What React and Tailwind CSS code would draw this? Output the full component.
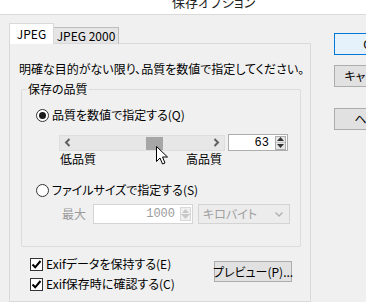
import React from 'react';

function Chevron({ dir = 'left', color = '#606060' }) {
  return (
    <svg width="7" height="9" viewBox="0 0 7 9">
      {dir === 'left' ? (
        <path d="M5.5 1 L2 4.5 L5.5 8" fill="none" stroke={color} strokeWidth="2" />
      ) : (
        <path d="M1.5 1 L5 4.5 L1.5 8" fill="none" stroke={color} strokeWidth="2" />
      )}
    </svg>
  );
}

function Spin({ disabled }) {
  const c = disabled ? '#c8c8c8' : '#333';
  return (
    <div className={`w-[11px] h-[14px] flex flex-col border ${disabled ? 'border-[#d8d8d8] bg-[#f0f0f0]' : 'border-[#adadad] bg-[#e6e6e6]'}`}>
      <div className="flex-1 flex items-center justify-center border-b border-[#c8c8c8]">
        <svg width="7" height="4" viewBox="0 0 7 4"><path d="M0 4 L3.5 0 L7 4 Z" fill={c} /></svg>
      </div>
      <div className="flex-1 flex items-center justify-center">
        <svg width="7" height="4" viewBox="0 0 7 4"><path d="M0 0 L3.5 4 L7 0 Z" fill={c} /></svg>
      </div>
    </div>
  );
}

function Radio({ checked, label }) {
  return (
    <div className="flex items-center h-[16px]">
      <div className="w-[13px] h-[13px] rounded-full border border-[#333] bg-white flex items-center justify-center">
        {checked && <div className="w-[7px] h-[7px] rounded-full bg-[#1a1a1a]" />}
      </div>
      <span className="ml-[3px]">{label}</span>
    </div>
  );
}

function Check({ label }) {
  return (
    <div className="flex items-center h-[16px]">
      <div className="w-[13px] h-[13px] border border-[#333] bg-white flex items-center justify-center">
        <svg width="11" height="11" viewBox="0 0 11 11">
          <path d="M1.5 5.5 L4.2 8.3 L9.5 2" fill="none" stroke="#000" strokeWidth="2" />
        </svg>
      </div>
      <span className="ml-[3px]">{label}</span>
    </div>
  );
}

export default function App() {
  return (
    <div className="relative w-[366px] h-[302px] overflow-hidden bg-[#f0f0f0] text-[12px] leading-[16px] text-black font-['Noto_Sans_CJK_JP',sans-serif] [font-feature-settings:'palt'] flex flex-col">
      {/* Title bar */}
      <div className="h-[15px] shrink-0 bg-white border-b border-[#dadada] overflow-hidden pl-[172px]">
        <div className="mt-[-6px] text-[13px] leading-[16px] text-[#222] whitespace-nowrap">保存オプション</div>
      </div>

      <div className="flex flex-1 min-h-0">
        {/* Left: tabs */}
        <div className="pl-[9px] pt-[8px] flex flex-col w-[311px] shrink-0">
          <div className="flex items-end h-[21px] relative z-10 -mb-px">
            <div className="w-[45px] h-[21px] bg-white border border-[#d9d9d9] border-b-0 flex items-center justify-center pb-[1px]">JPEG</div>
            <div className="w-[65px] h-[17px] bg-[#e5e5e5] border border-[#bdbdbd] border-l-0 border-b-[#d9d9d9] flex items-center justify-center">JPEG 2000</div>
          </div>
          <div className="w-[302px] flex-1 border border-[#d9d9d9] flex flex-col">
            <p className="ml-[9px] mt-[17px] whitespace-nowrap">明確な目的がない限り、品質を数値で指定してください。</p>

            {/* Group box */}
            <div className="ml-[11px] mt-[12px] w-[280px] h-[158px] shrink-0 relative border border-[#dcdcdc] rounded-[2px] flex flex-col">
              <span className="absolute left-[5px] top-[-9px] px-[1px] bg-[#f0f0f0]">保存の品質</span>

              <div className="ml-[14px] mt-[17px]">
                <Radio checked label="品質を数値で指定する(Q)" />
              </div>

              <div className="ml-[37px] mt-[11px] flex items-center">
                <div className="relative w-[166px] h-[16px] bg-[#e7e7e7] border border-[#dedede] flex items-center justify-between px-[4px]">
                  <Chevron dir="left" />
                  <div className="absolute left-[86px] top-[1px] w-[17px] h-[13px] bg-[#a6a6a6]" />
                  <Chevron dir="right" />
                </div>
                <div className="ml-[3px] w-[60px] h-[17px] bg-white border border-[#adadad] flex items-center justify-end pr-[1px]">
                  <span className="mr-[6px] font-['Liberation_Mono',monospace] text-[12px] leading-[14px]">63</span>
                  <Spin />
                </div>
              </div>

              <div className="ml-[38px] w-[162px] flex justify-between">
                <span>低品質</span>
                <span>高品質</span>
              </div>

              <div className="ml-[14px] mt-[15px]">
                <Radio label="ファイルサイズで指定する(S)" />
              </div>

              <div className="ml-[40px] mt-[6px] flex items-center">
                <span className="w-[31px] text-[#9a9a9a]">最大</span>
                <div className="w-[100px] h-[20px] bg-white border border-[#d4d4d4] flex items-center justify-end pr-[1px]">
                  <span className="mr-[5px] font-['Liberation_Mono',monospace] text-[#9a9a9a] leading-[14px]">1000</span>
                  <Spin disabled />
                </div>
                <div className="ml-[5px] w-[92px] h-[20px] bg-[#ececec] border border-[#d4d4d4] flex items-center justify-between pl-[4px] pr-[6px] text-[#a0a0a0]">
                  <span>キロバイト</span>
                  <svg width="8" height="5" viewBox="0 0 8 5"><path d="M0.5 0.5 L4 4 L7.5 0.5" fill="none" stroke="#b0b0b0" strokeWidth="1.4" /></svg>
                </div>
              </div>
            </div>

            <div className="flex justify-between">
              <div className="ml-[20px] mt-[9px] flex flex-col gap-[4px]">
                <Check label="Exifデータを保持する(E)" />
                <Check label="Exif保存時に確認する(C)" />
              </div>
              <div className="mr-[18px] mt-[14px] w-[78px] h-[21px] bg-[#e1e1e1] border border-[#adadad] flex items-center justify-center whitespace-nowrap">
                プレビュー(P)...
              </div>
            </div>
          </div>
        </div>

        {/* Right: buttons */}
        <div className="ml-[23px] pt-[18px] flex flex-col shrink-0">
          <div className="w-[75px] h-[22px] bg-[#e5f1fb] border border-[#0078d7] flex items-center justify-center">OK</div>
          <div className="mt-[10px] w-[75px] h-[22px] bg-[#e1e1e1] border border-[#adadad] flex items-center justify-center whitespace-nowrap">キャンセル</div>
          <div className="mt-[21px] w-[75px] h-[22px] bg-[#e1e1e1] border border-[#adadad] flex items-center justify-center whitespace-nowrap">ヘルプ</div>
        </div>
      </div>

      {/* Mouse pointer */}
      <svg className="absolute left-[156px] top-[146px]" width="13" height="19" viewBox="0 0 13 19">
        <path d="M0.5 0.5 L0.5 15.5 L4 12 L6.5 18 L9 17 L6.5 11 L11.5 11 Z" fill="#fff" stroke="#000" strokeWidth="1" strokeLinejoin="miter" />
      </svg>
    </div>
  );
}
